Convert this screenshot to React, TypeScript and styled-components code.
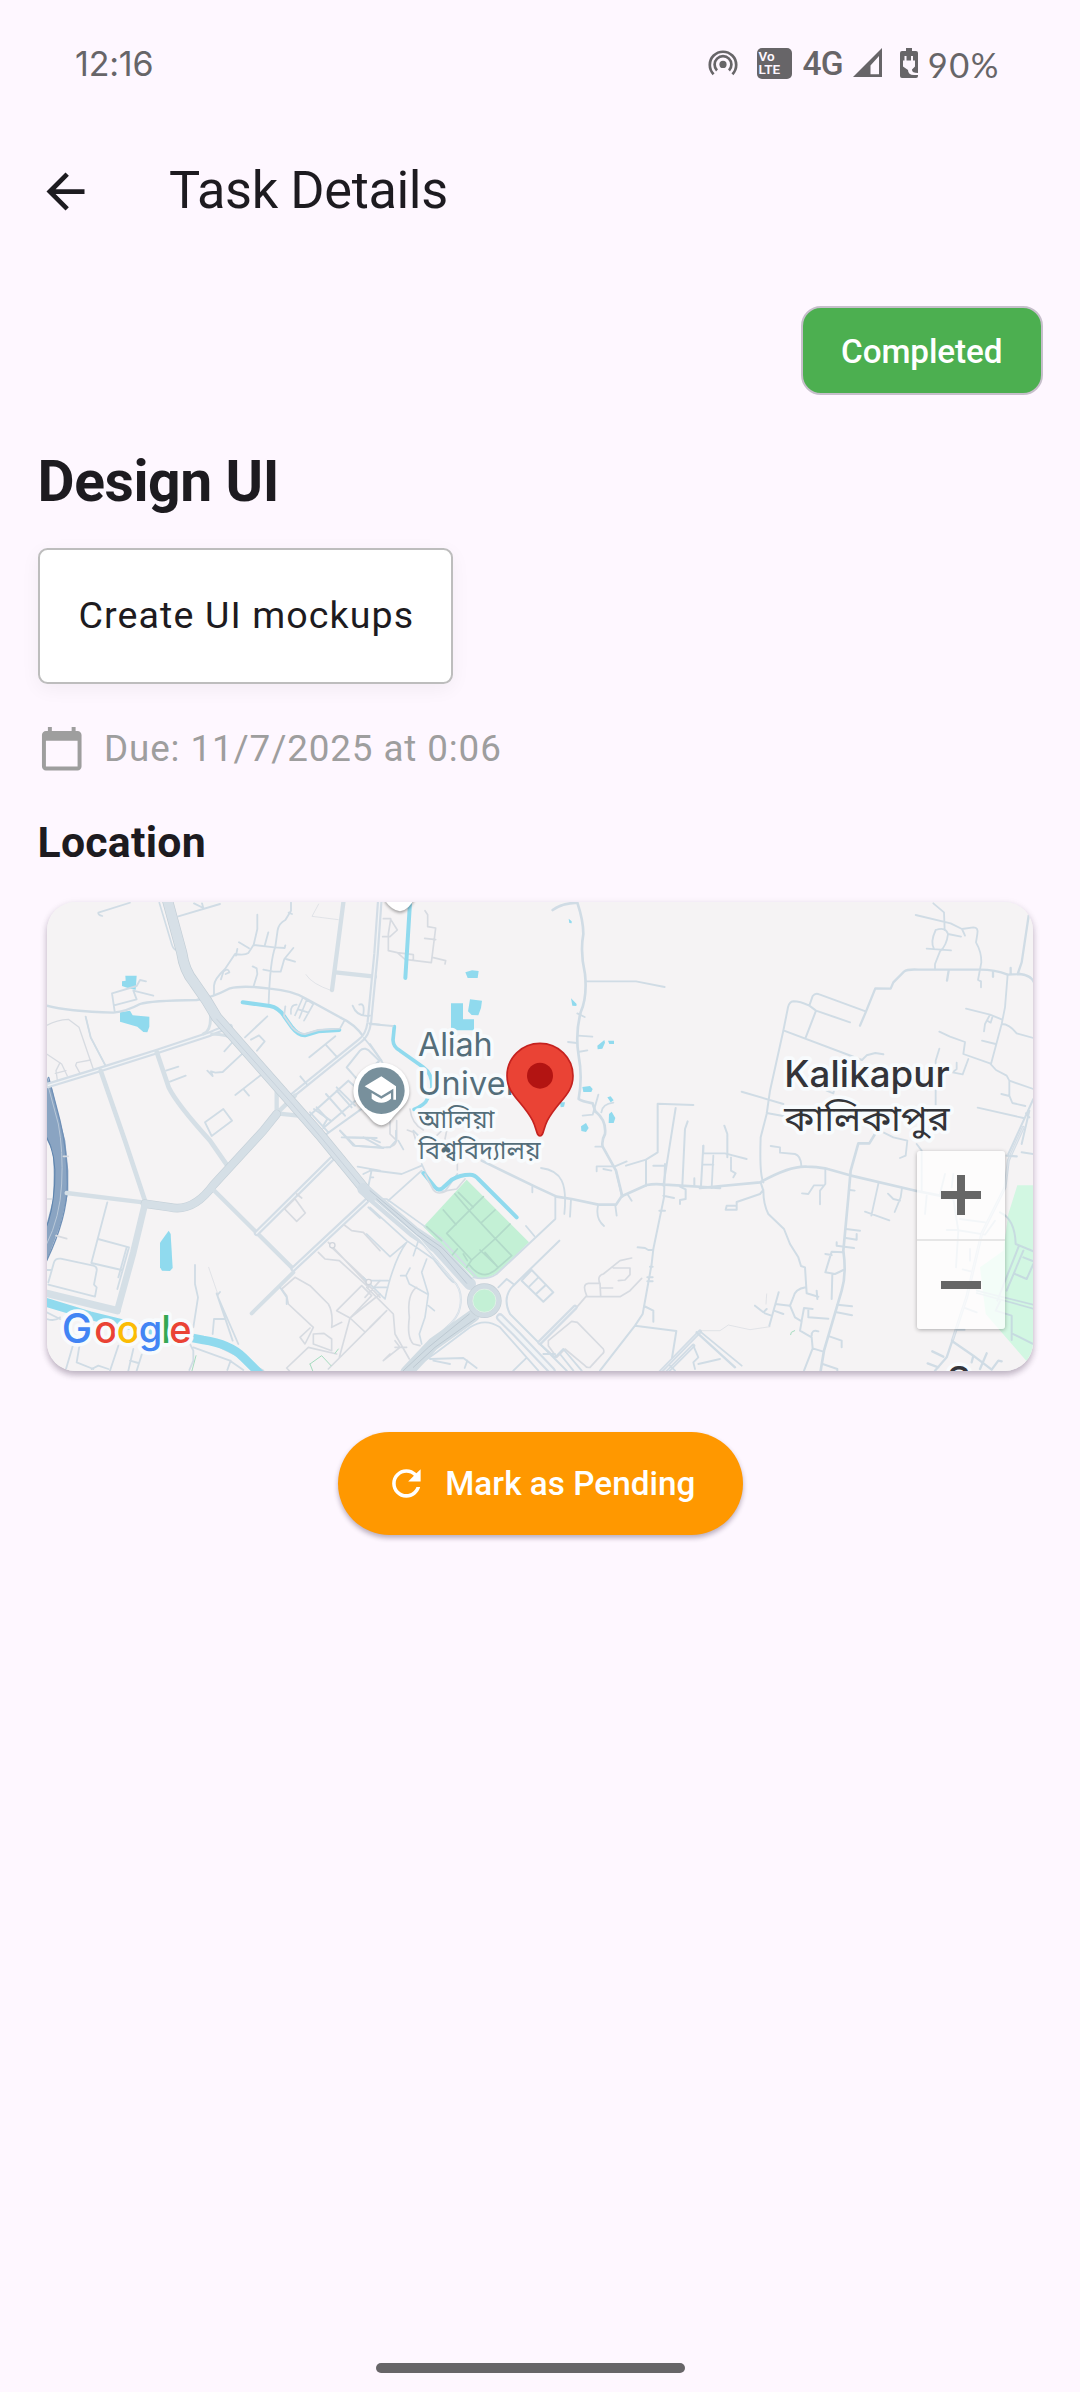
import React from "react";
import styled, { createGlobalStyle } from "styled-components";

const GlobalStyle = createGlobalStyle`
  *, *::before, *::after { box-sizing: border-box; }
  body { margin: 0; background: #fef7ff; }
`;

const Screen = styled.div`
  display: flex;
  flex-direction: column;
  width: 1080px;
  height: 2392px;
  overflow: hidden;
  background: #fef7ff;
  color: #1d1b20;
  font-family: Roboto, "Liberation Sans", sans-serif;
`;

const StatusBar = styled.div`
  display: flex;
  align-items: center;
  justify-content: space-between;
  height: 128px;
  padding: 0 80px 0 75px;
  color: #676568;
`;

const Clock = styled.span`
  font: 400 34px/40px Inter, Roboto, sans-serif;
  letter-spacing: -0.2px;
  margin-top: -1px;
`;

const StatusIcons = styled.div`
  display: flex;
  align-items: center;
`;

const Glyph = styled.svg<{ $gap?: number; $drop?: number }>`
  display: block;
  flex: none;
  margin-left: ${(p) => p.$gap ?? 0}px;
  margin-top: ${(p) => p.$drop ?? 0}px;
`;

const VolteBadge = styled.div`
  display: flex;
  flex-direction: column;
  justify-content: center;
  width: 35px;
  height: 31px;
  margin: -2px 0 0 19px;
  padding-left: 2px;
  border-radius: 5px;
  background: #676568;
  color: #fef7ff;
  font: 600 13.5px/13px Roboto, sans-serif;
`;

const Network = styled.span`
  margin: 0 0 0 11px;
  font: 500 33.5px/40px Roboto, sans-serif;
  letter-spacing: -0.8px;
`;

const Battery = styled.span`
  margin: 1px 0 0 10px;
  font: 400 34.5px/40px Lato, sans-serif;
  letter-spacing: 1.5px;
`;

const AppBar = styled.header`
  display: flex;
  align-items: center;
  height: 133px;
  padding-left: 37px;
`;

const Title = styled.h1`
  margin: 0 0 7px 75px;
  font-size: 52.25px;
  font-weight: 400;
  line-height: 66px;
  letter-spacing: -0.35px;
`;

const Body = styled.main`
  display: flex;
  flex-direction: column;
  align-items: flex-start;
  padding: 45px 37.5px 0;
`;

const StatusChip = styled.div`
  align-self: flex-end;
  display: flex;
  align-items: center;
  justify-content: center;
  width: 241.5px;
  height: 89px;
  padding-top: 1px;
  border: 2.4px solid #c6bfcb;
  border-radius: 20px;
  background: #4caf50;
  color: #fff;
  font-size: 33.25px;
  font-weight: 500;
  letter-spacing: -0.08px;
`;

const TaskTitle = styled.h2`
  margin: 49px 0 0;
  font-size: 57px;
  font-weight: 700;
  line-height: 76px;
  letter-spacing: -0.4px;
`;

const Description = styled.div`
  display: flex;
  align-items: center;
  width: 415px;
  height: 136px;
  margin-top: 28px;
  padding: 0 0 2px 39px;
  border: 2.4px solid #bdbdbd;
  border-radius: 9.5px;
  background: #fff;
  box-shadow: 0 5px 19px rgba(0, 0, 0, 0.05);
  font-size: 37.6px;
  letter-spacing: 1.1px;
  white-space: nowrap;
`;

const DueRow = styled.div`
  display: flex;
  align-items: center;
  gap: 19px;
  height: 57px;
  margin-top: 36px;
  color: #9e9e9e;
  font-size: 36.8px;
  letter-spacing: 0.88px;
`;

const SectionTitle = styled.h3`
  margin: 37px 0 0;
  font-size: 42.75px;
  font-weight: 700;
  line-height: 57px;
  letter-spacing: 0.28px;
`;

const MapCard = styled.section`
  position: relative;
  width: 986px;
  height: 469px;
  margin: 31px 0 0 9px;
  border-radius: 28.5px;
  overflow: hidden;
  background: #f5f3f4;
`;

const MapShadow = styled.div`
  margin-bottom: 61px;
  ${MapCard} { box-shadow: 0 4px 6px rgba(40, 20, 50, 0.26), 0 2px 9px rgba(40, 20, 50, 0.08); }
`;

const MapCanvas = styled.svg`
  display: block;
  width: 986px;
  height: 469px;
`;

const Way = styled.path<{ $w: number; $c: string }>`
  fill: none;
  stroke: ${(p) => p.$c};
  stroke-width: ${(p) => p.$w};
  stroke-linecap: round;
  stroke-linejoin: round;
`;

const Label = styled.text<{ $size: number; $color: string; $weight?: number }>`
  font-family: Inter, Roboto, "Noto Sans Bengali", "Noto Sans", sans-serif;
  font-size: ${(p) => p.$size}px;
  font-weight: ${(p) => p.$weight ?? 400};
  fill: ${(p) => p.$color};
  stroke: #f8fbfd;
  stroke-width: 22px;
  stroke-linejoin: round;
  paint-order: stroke;
`;

const BigLetter = styled.tspan`
  font-size: 122px;
`;

const ZoomControl = styled.div`
  position: absolute;
  left: 870px;
  top: 249px;
  display: flex;
  flex-direction: column;
  width: 88px;
  height: 178px;
  border-radius: 3px;
  background: rgba(255, 255, 255, 0.74);
  box-shadow: 0 1px 4px rgba(0, 0, 0, 0.3);
`;

const ZoomButton = styled.button`
  display: flex;
  flex: 1;
  align-items: center;
  justify-content: center;
  padding: 0;
  border: 0;
  background: none;
  & + & { border-top: 2px solid #e6e6e6; }
`;

const PendingButton = styled.button`
  align-self: center;
  display: flex;
  align-items: center;
  width: 405px;
  height: 103px;
  padding: 0 0 0 47px;
  border: 0;
  border-radius: 52px;
  background: #ff9800;
  box-shadow: 0 3px 5px rgba(40, 20, 50, 0.32);
  color: #fff;
  font: 500 33.25px/48px Roboto, sans-serif;
  letter-spacing: 0.04px;
  gap: 18px;
`;

const HomeBar = styled.div`
  width: 309px;
  height: 10px;
  margin: auto auto 19px 376px;
  border-radius: 5px;
  background: #676568;
`;

/* ---- map data: every tile is drawn at three units per pixel ---- */
type Kind = "trunk" | "road" | "twin" | "lane" | "path" | "canal";
type Line = [Kind, string, number?];

const tileA: Line[] = [
  ["lane", "M205 66 L300 36 M205 66 Q203 72 217 76 M388 36 L425 160 Q430 178 440 178", 5],
  ["lane", "M445 77 L570 40 M492 38 L520 52 L516 38 M682 72 L682 115 L671 162 L655 187 Q645 195 615 190 L585 235 Q553 265 552 285 V312 M627 155 L657 173 M622 175 L618 195 M715 125 L704 165 M671 163 L733 170 L764 172 L766 164"],
  ["lane", "M783 36 V60 L766 88 Q747 98 743 118 L736 168 Q720 210 716 338 M776 66 L786 70 M700 237 L730 243 H752 L763 205 L790 172 M768 205 L795 213 M668 227 L680 233 L682 250 L671 286 M573 266 L580 243 Q594 230 598 245 L587 250"],
  ["lane", "M50 345 Q110 362 250 366 Q290 362 330 340 Q360 330 500 328 Q545 322 600 293 Q640 283 720 294 Q790 300 830 325 L930 380 Q975 400 1002 440", 7],
  ["lane", "M254 362 L246 308 L320 286 L330 268 L348 272 M252 344 L320 326 L310 300 L370 315"],
  ["path", "M50 404 Q80 388 115 386 L147 410 L190 536 M167 378 L182 440 L228 528 M50 490 L95 520 L112 556 M90 516 L78 540 L82 568 M182 508 L140 516 L137 524 L150 548 M76 548 L108 540", 4],
  ["lane", "M167 378 L182 440 L228 528 M408 540 L445 528 M420 573 L467 555 M532 540 L548 556 L543 542 L556 546 L578 544 L638 488 M583 482 L608 454 M645 440 L712 377 M663 447 L687 434 L704 452 L681 480 M616 613 L694 552 M641 596 L657 615 M525 695 L580 655 L606 690 L545 736 Z"],
  ["twin", "M55 584 L212 536 L380 483 L540 430 Q575 413 600 408", 17],
  ["road", "M541 370 Q545 420 520 430 M545 430 Q595 430 615 450", 9],
  ["road", "M380 483 L416 590 Q440 640 540 750 L590 822", 14],
  ["road", "M212 540 L285 750 L345 930", 14],
  ["canal", "M638 335 L720 346 Q745 350 762 376 L786 410 Q805 435 825 434 L865 422 L928 418", 12],
  ["lane", "M766 347 L762 376 L786 410 Q805 430 825 430 L865 418 L930 414 L943 390"],
  ["lane", "M783 370 Q780 342 800 342 M795 374 L818 322 M808 382 L830 328 M822 390 L850 340 M818 320 L850 340 M805 356 L836 366", 5],
  ["road", "M940 36 L906 298", 13],
  ["road", "M916 245 L1035 258", 13],
  ["twin", "M1050 20 L1038 190 L1018 395 Q1012 435 990 450 L780 620", 17],
  ["lane", "M838 500 L916 437 M887 462 L922 500 M811 557 L830 580 M1002 442 Q1030 475 1060 520 M1018 398 L1050 402 M968 345 Q980 380 1020 375 M1000 370 Q1005 335 988 342"],
  ["path", "M828 252 Q845 280 905 300 M866 40 L846 77 L925 87", 2],
  ["road", "M740 600 V668 L805 675 M740 668 L795 615", 13],
  ["lane", "M840 665 L895 725 M860 650 L892 685 L880 705 M838 675 L955 570 L1000 610 L880 712 M888 610 L945 675 M920 590 L975 645 M880 737 L1050 615", 6],
  ["lane", "M950 530 L990 480 Q1005 465 1025 488 L1048 510 L985 570 Z M930 720 L975 765 L1060 772 M945 740 L1040 742 M920 600 L965 650 M852 655 L902 690", 6],
];

const tileB: Line[] = [
  ["path", "M165 60 L173 72 V108 L197 112 L184 216 L105 206 L82 186 L55 180 V130 L62 86 L82 118 L60 138 L38 138 M40 84 H62 M82 186 L130 192 V210 M164 143 L197 147 M187 200 L227 210 L225 220", 5],
  ["canal", "M120 36 L106 262", 12],
  ["canal", "M73 408 L69 448 Q70 470 90 480 L160 530 Q188 550 186 590 L172 625 Q166 642 132 656", 11],
  ["lane", "M0 400 L68 406 M0 460 L35 510"],
  ["lane", "M548 58 Q575 38 622 36 Q640 90 640 130 Q630 185 645 250 Q652 320 632 365 Q615 430 626 495 Q638 560 626 625 Q635 632 668 638 L676 662 Q710 690 705 730 Q694 750 698 768 L738 840 L757 917", 8],
  ["lane", "M647 272 H798 L884 289 M622 368 L644 379 M624 435 L667 438 M594 454 L620 457 M624 484 L652 479 M638 675 L668 672 L685 612 M668 638 L676 665 M694 665 Q697 640 730 636"],
  ["lane", "M970 643 L863 639 V785 L828 807 L768 825 M917 652 L880 885 M953 692 L945 715 L937 885 M863 785 L828 807 V885 M850 825 H885", 6],
  ["path", "M120 655 Q125 700 160 718 M80 690 V750 Q75 770 50 770 M60 690 V730 L80 750 M112 718 L130 725 L138 750 M200 735 L215 720 M230 720 L225 745", 5],
];

const tileC: Line[] = [
  ["lane", "M700 38 L732 65 L734 118 M647 73 L752 98 L786 115 L795 135 M786 115 L820 110 Q836 110 832 130 L828 155 Q845 185 844 215 L834 268 L843 272 V290 M707 118 Q690 155 702 175 M707 118 Q738 108 744 130 Q740 165 720 182 L705 220 V236 M680 174 L753 179 M744 130 L783 138"],
  ["lane", "M480 405 L497 365 L526 293 L572 294 L580 275 L612 243 Q622 235 655 237 H840 Q885 237 923 252 L960 250 Q995 255 1002 275 M986 75 L965 215 L953 250 M932 232 V250 M879 242 V258 M746 240 L741 270", 7],
  ["lane", "M923 252 L915 350 L905 400 L873 520 M798 354 L870 372 L905 386 M870 372 L855 400 L852 422 M877 380 L872 396 L862 390 M905 400 Q928 400 950 428 L1000 442 M846 450 L887 460 M718 423 L750 438 L795 454 L790 490 L870 518 L888 538 L920 555 L928 570 L1000 595 M805 505 L788 551 L758 545 L770 535 V516 M928 570 V615 L937 637 L976 646 M904 610 L928 616 M833 651 L970 682 M718 474 L707 510 V690"],
  ["lane", "M497 362 L358 311 Q346 306 338 316 L328 345 L348 360 L450 395 M328 345 Q300 332 280 332 Q268 333 264 350 L250 420 L210 600 L200 670 L182 740 Q178 850 190 875 M348 360 L317 441 M250 419 L486 508 L500 494 L526 487 L550 491 M125 603 L250 640 M200 667 L270 680 M380 600 L400 608 L404 590 M73 705 L82 730 V800", 6],
  ["lane", "M1000 625 L925 790 M988 660 L965 760 M1000 790 L965 785 M978 668 L988 680", 6],
];

const tileD: Line[] = [
  ["road", "M110 187 L345 216", 13],
  ["trunk", "M740 -50 L700 0 L550 163 Q490 245 420 230 L345 219", 22],
  ["road", "M345 219 L310 365 L262 540", 20],
  ["road", "M50 488 L262 540", 22],
  ["road", "M548 175 L790 415", 13],
  ["twin", "M680 308 L905 85", 17],
  ["twin", "M790 415 L1010 210", 17],
  ["road", "M790 425 L665 548", 12],
  ["lane", "M232 215 L184 397 L275 418 M204 325 L297 350 L262 475 M290 350 L265 440 M55 455 L72 395 Q76 382 92 384 L190 405 Q202 408 200 420 L192 462 L200 470 L195 498 L55 462 M50 418 H64"],
  ["path", "M78 315 L110 324 M50 205 H64 M115 77 H100", 5],
  ["lane", "M495 403 V460 L504 500 L490 590 M560 488 L608 630 M565 490 L570 484 M560 490 L625 640 M548 610 L552 565 H582 M50 545 L90 565 M310 590 L560 645 L640 685 L700 720"],
  ["path", "M536 410 L565 495", 2],
  ["path", "M764 235 L795 204 L826 247 L800 272 Z M800 190 L815 202 M943 283 L965 300 L1000 305 L1050 360 M905 350 L1016 455 M895 335 L1050 500 M865 365 L885 385 L928 390 L1016 470 M1050 450 L1005 500 M920 540 L995 465 L1025 495 L960 562 Z M1050 490 L960 562 M960 562 L1005 604", 5],
  ["path", "M795 440 L840 465 L895 520 Q910 545 905 590 L935 575 M795 440 L755 475 L770 495 L775 520 L850 590 M850 590 L825 640 L810 620 L840 592 M850 610 L882 608 L905 625 V660 L850 640 Z M770 712 L835 650 L920 670 M770 712 L800 745 M960 562 L928 680 M895 715 L1050 560", 5],
  ["lane", "M750 470 L770 500 V520"],
  ["lane", "M1000 130 L1025 118 L1014 172 M983 108 L1050 120 M1015 230 L1050 262 M1020 140 H1030 M930 0 L970 45 L1050 50 M935 20 L1020 22 L1050 35"],
  ["canal", "M45 514 L180 555 L330 592 L520 628 Q600 640 640 680 L695 735", 26],
  ["lane", "M50 565 Q75 573 90 560 M130 640 L108 715 M150 635 L140 695 L190 715 M265 645 L240 720 M310 655 L295 720 M335 672 L320 720 M300 690 L325 697 M470 620 L490 660 V690 L478 718 M490 650 L600 690 L640 718 M602 690 L592 718 M185 715 L205 705 L235 715"],
];

const tileE: Line[] = [
  ["lane", "M0 118 L95 130 L155 105 M55 210 L155 120 M155 100 Q180 160 205 180 L225 182 L262 130 M-20 20 L35 50 H60 L78 30 V0 M85 30 L100 56 M130 0 L160 30"],
  ["canal", "M160 127 L195 170 Q205 182 218 172 L245 147 Q270 132 300 132 Q315 132 325 145 L440 260", 12],
  ["path", "M165 130 L190 178 Q205 195 230 180 L260 175 L285 145 M262 118 V95", 5],
  ["lane", "M335 90 L500 170 L560 198 L605 205 L685 222 H738 L755 197 L830 163 Q855 158 885 162 L1050 172", 8],
  ["lane", "M513 112 Q560 118 575 150 Q590 180 583 250 M487 168 V185 M556 200 V265 L380 430 Q350 450 310 440 M468 286 L493 316 M603 206 L600 258 M684 225 Q676 265 702 286 M736 225 L740 255 M774 193 L785 210 M676 48 H695 M680 122 V107 H735 L770 92 M700 115 L724 120 M738 120 L755 195"],
  ["lane", "M885 100 L882 200 L850 355 L845 400 L818 550 L795 585 L690 720 M795 585 L919 601 L906 682 M803 350 L825 352 L835 358 H850 M840 408 H848 M832 440 H848 M832 452 H848 M822 526 L850 540 V573 M868 240 H885 M880 195 L912 202 M930 168 L947 176 V205 L930 208 V220 M973 165 V143 M1000 45 L993 165", 6],
  ["lane", "M568 330 L430 465 M430 465 Q395 500 420 550 L510 640 L590 720 M455 450 L485 418 L550 485 L520 513 L455 450 M475 470 L505 440 M498 490 L528 462", 6],
  ["path", "M650 495 Q635 460 655 458 H690 L692 495 M652 498 H750 L780 480 L815 443 M690 472 H728 M690 460 Q680 435 700 430 L750 390 L785 382 M730 412 H780 V432 L765 448 L745 450 M620 530 L650 495", 5],
  ["twin", "M510 635 L615 530", 16],
  ["path", "M535 630 L605 572 L622 575 L700 655 Q705 665 695 672 L660 710 Q650 712 645 705 L585 655 L560 680 L535 645 Z", 5],
  ["lane", "M510 640 L555 680 L580 655 L635 720 M570 670 L610 720 M555 670 H520"],
  ["twin", "M870 725 L990 602 M890 725 L970 645", 12],
  ["lane", "M990 602 L1115 705 M970 645 L985 680 L970 695 L975 715 M985 700 L1050 685 M900 705 L915 720"],
  ["twin", "M25 210 L130 305 L250 450 Q280 480 270 530 Q265 560 230 590 L110 705", 6],
  ["lane", "M0 230 L110 330 L190 385 Q240 450 250 455 M25 205 H50 L140 270 L210 320 L320 440 M130 375 L145 330 M-10 310 L60 378 L110 335 M110 335 Q70 390 45 505 L-20 440 M0 450 H55 M10 470 H50 M170 385 L155 425 L175 490 L165 560 L148 610 L155 640 M120 412 L108 435 L118 460 L172 490 M92 435 H108 M175 525 L193 540", 5],
  ["path", "M140 470 Q110 490 118 560 Q110 620 130 640 L150 645 M-10 470 L70 550 L75 610 L118 685 M75 630 L90 650 L40 690 L60 670 M75 650 L110 650 M0 590 L50 540", 5],
  ["twin", "M390 560 L440 610 L545 720", 24],
  ["lane", "M180 685 L280 682 L320 712 M190 690 L240 700 M292 690 L284 712 M150 700 L200 665 L300 590 Q345 560 390 590 L505 720 M430 720 L468 683 M385 470 L410 445 L430 460"],
];

const tileF: Line[] = [
  ["lane", "M0 172 L180 155 Q270 105 320 108 Q350 108 375 113 L450 134 L650 181 L720 195 L760 205", 8],
  ["lane", "M525 10 L508 38 H475 L452 120 L445 200 L430 360 Q440 430 425 480 L372 660 L362 720", 8],
  ["lane", "M10 45 V68 H75 L140 85 M40 75 L35 172 M10 102 H40 M93 80 V120 L107 128 L100 140 M212 46 L240 50 V66 L285 70 Q302 75 304 105 M376 117 V160 L360 180 V221 M372 164 H342 L325 190 L306 188 M536 155 L514 255 M495 243 L568 269 M606 172 L602 200 L584 244 M564 189 L580 205 L600 210 M450 178 L464 180"],
  ["lane", "M190 178 L180 190 L110 214 V237 H77 L80 225 H105 M182 155 L190 180 Q190 220 205 250 L252 295 L270 340 L295 380 L303 406 L315 410 L320 488 L355 498 M350 480 L352 505 M317 470 Q285 475 280 500 L270 525 L226 520 M236 485 L208 585 M222 540 L250 550 M165 525 L190 545 L200 535 M195 548 L212 554", 6],
  ["lane", "M270 525 L285 560 L305 572 L300 600 L335 620 L338 653 L370 663 M338 653 L312 720 M305 570 L312 532 L338 535 M325 535 V560 L385 564 M335 615 Q335 595 355 602 M388 617 L425 630 V650 M368 700 L412 715 V720 M412 522 L456 527 M410 545 L456 554 M397 430 L395 505 M430 418 L405 430 L376 425 L395 363 L430 365 M376 370 L395 373 M410 335 V345 L462 352 M438 295 L480 300 M438 322 L470 327 V310", 6],
  ["lane", "M550 5 L580 20 L622 30 L617 75 L600 82 M650 40 L665 60 V180 M760 205 Q770 270 775 300 L768 410 M735 130 L720 190 M760 130 L755 170 M780 265 L855 275 M740 298 H770 L855 312 L885 270 M680 195 L675 250 M810 355 V390 M788 416 L812 422 M790 530 L830 545"],
  ["twin", "M970 -10 L925 90 L915 170 L845 310 L800 500 L757 630", 9],
  ["lane", "M757 630 L740 680 L705 720 M757 632 L820 675 L875 717 L895 690 L905 692 M820 675 L815 695 M860 668 L840 715 M697 662 L730 678 M683 698 L715 710 M770 597 H793 M920 75 L950 77 M-10 605 L105 710", 7],
  ["path", "M5 600 H60 L85 583 L150 597 L210 588 M200 490 L198 520", 2],
];

const parkWays: Line[] = [
  ["road", "M900 245 Q945 265 947 340 L1000 362 M957 345 L892 510 M970 360 L920 480 M970 380 L1000 392 M945 430 L980 445 L1000 400", 6],
  ["road", "M830 480 L1000 522 M830 487 L1000 534", 5],
  ["road", "M900 512 L887 540 L935 555 V628 M935 608 L1000 640", 6],
];

const COLORS: Record<Kind, string> = {
  trunk: "#d5dfe6",
  road: "#d5dfe6",
  twin: "#d3dde6",
  lane: "#d0dce5",
  path: "#d7dbe1",
  canal: "#90daee",
};

const DEFAULT_WIDTH = 5.5;

function Lines({ items, x = 0, y = 0 }: { items: Line[]; x?: number; y?: number }) {
  return (
    <g transform={`translate(${x} ${y})`}>
      {items.map(([kind, d, w = DEFAULT_WIDTH], i) => (
        <React.Fragment key={i}>
          {kind === "trunk" && <Way d={d} $w={w + 4} $c="#c6d1d9" />}
          <Way d={d} $w={w} $c={COLORS[kind]} />
          {kind === "twin" && <Way d={d} $w={Math.max(1.5, w - 13)} $c="#f1f3f5" />}
        </React.Fragment>
      ))}
    </g>
  );
}

function MapDrawing() {
  return (
    <MapCanvas viewBox="51 34 2958 1407" preserveAspectRatio="none">
      <rect x="0" y="0" width="3100" height="1500" fill="#f5f3f4" />
      {/* river on the western edge */}
      <path d="M45 545 L65 590 L90 690 L106 750 L115 840 L115 905 L92 1000 L45 1125 V1020 L68 930 Q75 830 66 780 L45 735 Z" fill="#8aa4c2" />
      <Way d="M48 735 Q80 790 74 880 T45 1020" $w={3} $c="#5c83ad" />
      <Way d="M56 560 L90 690 Q112 780 112 880 T50 1110" $w={4} $c="#6f90b7" />
      <Way d="M50 570 L85 700 Q100 780 95 880 T50 1060" $w={3} $c="#b9c8d8" />
      {/* park east */}
      <path d="M2962 884 H3010 V1440 L2990 1412 L2867 1270 L2850 1130 L2920 1080 L2935 970 Z" fill="#d2f7e2" />
      {/* ponds */}
      <g fill="#90daee">
        <path d="M286 255 H320 L317 297 L300 294 L276 286 V272 L287 270 Z M270 365 L300 360 L308 374 L358 378 V408 L352 425 L340 424 L322 408 L270 393 Z" />
        <path d="M390 1056 L416 1020 L422 1030 L428 1132 L420 1141 L396 1140 L390 1130 Z" />
        <path transform="translate(1020 0)" d="M243 338 H279 V386 H312 V419 H243 Z M300 326 L336 330 L333 352 L325 374 L305 373 L294 362 Z M286 245 L306 239 L326 241 L323 262 L293 262 Z M596 84 L605 92 V98 L598 97 Z M603 323 L620 340 L619 346 L607 345 Z M682 465 L703 448 L705 456 L697 474 L683 476 Z M714 450 H732 V460 H718 Z M637 589 L660 586 L668 595 L664 604 L640 604 Z M712 620 L722 617 L731 629 L722 635 Z M717 670 L725 663 L736 682 L731 697 L716 697 Z M633 707 L648 697 L656 712 L648 724 L634 721 Z M570 635 L585 635 L582 648 L572 650 Z" />
      </g>
      {/* central park */}
      <path transform="translate(1020 720)" d="M290 147 L477 335 L385 425 Q350 450 310 440 L160 288 Z" fill="#c3f0d5" />
      <Lines items={tileA} />
      <Lines items={tileB} x={1020} />
      <Lines items={tileC} x={2010} />
      <Lines items={tileD} y={720} />
      <Lines items={tileE} x={1020} y={720} />
      <Lines items={tileF} x={2010} y={720} />
      <g transform="translate(2010 720)" opacity={0.9}>
        {parkWays.map(([, d, w], i) => (
          <Way key={i} d={d} $w={w ?? 5} $c="#c5d8e0" />
        ))}
      </g>
      <g transform="translate(1020 720)">
        <Way
          d="M255 190 L298 240 L376 324 L425 375 M385 410 L330 358 M220 238 L258 282 M298 240 L340 198 M230 308 L305 388 L290 410 M230 308 L298 240 M376 324 L420 280 M335 275 L375 238 M170 288 L215 330 M376 324 L305 388 M296 400 Q320 432 345 432 Q365 430 385 410 L425 375 M345 365 L382 408 M245 375 L262 355 M280 370 L292 390 M265 185 L310 230"
          $w={5}
          $c="#b2dac9"
        />
      </g>
      {/* trunk road with its carriageways */}
      {[["#c3ced6", 33], ["#d7e0e7", 29]].map(([c, w]) => (
        <Way key={c} d="M410 20 L455 185 Q463 240 492 275 L530 330 L560 380 L780 630 L868 730 L1020 915" $w={w as number} $c={c as string} />
      ))}
      <Way d="M560 385 L780 632 L868 734 L1020 917" $w={3} $c="#c8d2dc" />
      <g transform="translate(1020 720)">
        <Way d="M-20 175 L130 303 L200 350 L300 460" $w={36} $c="#d3dde5" />
        <Way d="M20 205 L140 312 L205 358 L290 458 M0 180 L150 305 L215 350 L305 445" $w={3} $c="#bdc9d4" />
        <Way d="M15 210 L150 325 L275 470" $w={3} $c="#f1f3f5" />
        <Way d="M310 555 L190 640 L110 725" $w={38} $c="#d1dce3" />
        <Way d="M298 550 L175 650 L100 720 M315 565 L195 650 L130 710" $w={3} $c="#bdc9d2" />
        <circle cx="343" cy="510" r="43" fill="#c3f0d5" stroke="#c3ced6" strokeWidth="18" />
        <circle cx="343" cy="510" r="43" fill="none" stroke="#d1dce3" strokeWidth="14" />
        <circle cx="343" cy="510" r="35" fill="#c3f0d5" stroke="#eef3f0" strokeWidth="2" />
      </g>
      <g transform="translate(0 720)">
        <Way d="M840 700 L875 675 L903 705 M840 700 L850 725 M915 668 L925 655 M498 675 L486 720" $w={3} $c="#a7dcc0" />
        <circle cx="907" cy="344" r="8" fill="#f5f3f4" stroke="#d0d5dc" strokeWidth="4" />
        <circle cx="1016" cy="454" r="8" fill="#f5f3f4" stroke="#d0d5dc" strokeWidth="4" />
      </g>
      <Way d="M2282 1332 L2284 1325 L2294 1320" $w={3} $c="#a7dcc0" />

      {/* university marker */}
      <g transform="translate(1020 0)">
        <path d="M45 20 H135 Q118 58 90 62 Q65 58 45 30 Z" fill="#fff" style={{ filter: "drop-shadow(0 5px 5px rgba(0,0,0,.35))" }} />
        <path d="M34 516 A84 84 0 0 1 118 600 C118 640 90 652 65 685 Q34 722 3 685 C-22 652 -50 640 -50 600 A84 84 0 0 1 34 516 Z" fill="#fff" style={{ filter: "drop-shadow(0 5px 5px rgba(0,0,0,.35))" }} />
        <circle cx="34" cy="600" r="70" fill="#78909c" />
        <path d="M34 557 L-16 587 L34 616 L70 594 V627 H78 V587 Z" fill="#fff" />
        <path d="M5 607 L34 624 L63 607 V624 Q50 636 34 636 T5 624 Z" fill="#fff" />
      </g>

      <Label x="1164" y="497" $size={97} $color="#546e7a" textLength="224">Aliah</Label>
      <Label x="1162" y="614" $size={97} $color="#546e7a" textLength="302">Univer</Label>
      <Label x="1165" y="712" $size={76} $color="#546e7a" textLength="228" lengthAdjust="spacingAndGlyphs">আলিয়া</Label>
      <Label x="1165" y="806" $size={76} $color="#546e7a" textLength="367" lengthAdjust="spacingAndGlyphs">বিশ্ববিদ্যালয়</Label>
      <Label x="2263" y="590" $size={110} $weight={500} $color="#333439" textLength="496">Kalikapur</Label>
      <Label x="2263" y="721" $size={106} $color="#333439" textLength="496" lengthAdjust="spacingAndGlyphs">কালিকাপুর</Label>
      <Label x="2751" y="1508" $size={110} $weight={500} $color="#333439">S</Label>

      {/* location pin */}
      <g transform="translate(1020 0)">
        <path
          d="M510 736 C499 736 501 716 488 690 C456 630 411 612 411 555 A99 97 0 0 1 609 555 C609 612 564 630 532 690 C519 716 521 736 510 736 Z"
          fill="#ea4335"
          stroke="#c5221f"
          strokeWidth="5"
        />
        <circle cx="510" cy="555" r="39" fill="#b31412" />
      </g>

      <Label x="95 193 260 326 394 418" y="1357" $size={114} $weight={500} $color="#4285f4">
        <BigLetter>G</BigLetter><tspan fill="#ea4335">o</tspan><tspan fill="#fbbc04">o</tspan>g<tspan fill="#34a853">l</tspan><tspan fill="#ea4335">e</tspan>
      </Label>
    </MapCanvas>
  );
}

export default function App() {
  return (
    <>
      <GlobalStyle />
      <Screen>
        <StatusBar>
          <Clock>12:16</Clock>
          <StatusIcons>
            <Glyph width="30" height="27" viewBox="0 0 30 27" $drop={-4}>
              <g fill="none" stroke="#676568" strokeWidth="2.7">
                <path d="M5.6 25.2 A13.2 13.2 0 1 1 24.4 25.2" />
                <path d="M9 21.5 A8.4 8.4 0 1 1 21 21.5" />
              </g>
              <circle cx="15" cy="15.4" r="3.6" fill="#676568" />
            </Glyph>
            <VolteBadge>
              <span>Vo</span>
              <span>LTE</span>
            </VolteBadge>
            <Network>4G</Network>
            <Glyph width="29" height="29" viewBox="0 0 29 29" $gap={10} $drop={-3}>
              <path fillRule="evenodd" d="M29 0 V29 H0 Z M26 8 L17.5 17.5 V26.3 H26 Z" fill="#676568" />
            </Glyph>
            <Glyph width="18" height="30" viewBox="0 0 18 30" $gap={18} $drop={-3}>
              <path d="M6 0 H12 V3 H16 Q18 3 18 5 V28 Q18 30 16 30 H2 Q0 30 0 28 V5 Q0 3 2 3 H6 Z" fill="#676568" />
              <path d="M4.5 8 H6.5 V12.5 H11 V8 H13 V12.5 H15 V18.5 L12 21.5 V22 Q12 25 18 25 V27 H14 Q8 27 8 22 L3 18.5 V12.5 H4.5 Z" fill="#fef7ff" />
            </Glyph>
            <Battery>90%</Battery>
          </StatusIcons>
        </StatusBar>

        <AppBar>
          <Glyph width="57" height="57" viewBox="0 0 24 24" $drop={-6}>
            <path d="M20 11H7.83l5.59-5.59L12 4l-8 8 8 8 1.41-1.41L7.83 13H20v-2z" fill="#1d1b20" />
          </Glyph>
          <Title>Task Details</Title>
        </AppBar>

        <Body>
          <StatusChip>Completed</StatusChip>
          <TaskTitle>Design UI</TaskTitle>
          <Description>Create UI mockups</Description>
          <DueRow>
            <Glyph width="47.5" height="47.5" viewBox="0 0 24 24">
              <path d="M20 3h-1V1h-2v2H7V1H5v2H4c-1.1 0-2 .9-2 2v16c0 1.1.9 2 2 2h16c1.1 0 2-.9 2-2V5c0-1.1-.9-2-2-2zm0 18H4V8h16v13z" fill="#9e9e9e" />
            </Glyph>
            <span>Due: 11/7/2025 at 0:06</span>
          </DueRow>
          <SectionTitle>Location</SectionTitle>
          <MapShadow>
            <MapCard>
              <MapDrawing />
              <ZoomControl>
                <ZoomButton aria-label="Zoom in">
                  <Glyph width="40" height="40" viewBox="0 0 40 40">
                    <path d="M16 0h8v16h16v8H24v16h-8V24H0v-8h16z" fill="#666" />
                  </Glyph>
                </ZoomButton>
                <ZoomButton aria-label="Zoom out">
                  <Glyph width="40" height="40" viewBox="0 0 40 40">
                    <path d="M0 16h40v8H0z" fill="#666" />
                  </Glyph>
                </ZoomButton>
              </ZoomControl>
            </MapCard>
          </MapShadow>
          <PendingButton>
            <Glyph width="42.75" height="42.75" viewBox="0 0 24 24">
              <path d="M17.65 6.35C16.2 4.9 14.21 4 12 4c-4.42 0-7.99 3.58-7.99 8s3.57 8 7.99 8c3.73 0 6.84-2.55 7.73-6h-2.08c-.82 2.33-3.04 4-5.65 4-3.31 0-6-2.69-6-6s2.69-6 6-6c1.66 0 3.14.69 4.22 1.78L13 11h7V4l-2.35 2.35z" fill="#fff" />
            </Glyph>
            <span>Mark as Pending</span>
          </PendingButton>
        </Body>
        <HomeBar />
      </Screen>
    </>
  );
}
